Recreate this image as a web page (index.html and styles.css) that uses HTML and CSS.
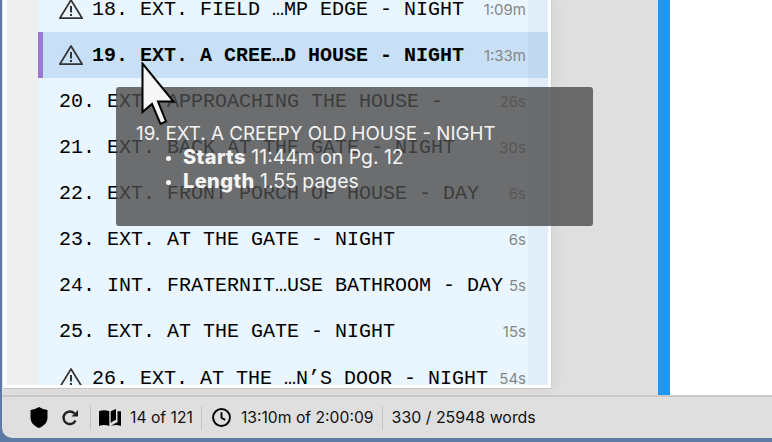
FILE: index.html
```html
<html>
    <head>
        <link rel="stylesheet" href="styles.css">
    </head>
    <body>
        <div class="window">
            <div class="main">
                <div class="panel">
                    <div class="margin"></div>
                    <div class="scenes">
                        <div class="scene">
                            <svg class="warn" viewBox="0 0 24 20"><path d="M12 1 .8 19.200h22.400z" fill="none" stroke="#333" stroke-width="1.700" stroke-linejoin="round"/><path d="M12 7v6.500M12 15v2" stroke="#333" stroke-width="2"/></svg>
                            <span class="name">18. EXT. FIELD …MP EDGE - NIGHT</span><span class="time">1:09m</span><span class="gutter"></span>
                        </div>
                        <div class="scene active">
                            <svg class="warn" viewBox="0 0 24 20"><path d="M12 1 .8 19.200h22.400z" fill="none" stroke="#333" stroke-width="1.700" stroke-linejoin="round"/><path d="M12 7v6.500M12 15v2" stroke="#333" stroke-width="2"/></svg>
                            <span class="name">19. EXT. A CREE…D HOUSE - NIGHT</span><span class="time">1:33m</span><span class="gutter"></span>
                        </div>
                        <div class="scene">
                            <span class="name">20. EXT. APPROACHING THE HOUSE -</span><span class="time">26s</span><span class="gutter"></span>
                        </div>
                        <div class="scene">
                            <span class="name">21. EXT. BACK AT THE GATE - NIGHT</span><span class="time">30s</span><span class="gutter"></span>
                        </div>
                        <div class="scene">
                            <span class="name">22. EXT. FRONT PORCH OF HOUSE - DAY</span><span class="time">6s</span><span class="gutter"></span>
                        </div>
                        <div class="scene">
                            <span class="name">23. EXT. AT THE GATE - NIGHT</span><span class="time">6s</span><span class="gutter"></span>
                        </div>
                        <div class="scene">
                            <span class="name">24. INT. FRATERNIT…USE BATHROOM - DAY</span><span class="time">5s</span><span class="gutter"></span>
                        </div>
                        <div class="scene">
                            <span class="name">25. EXT. AT THE GATE - NIGHT</span><span class="time">15s</span><span class="gutter"></span>
                        </div>
                        <div class="scene">
                            <svg class="warn" viewBox="0 0 24 20"><path d="M12 1 .8 19.200h22.400z" fill="none" stroke="#333" stroke-width="1.700" stroke-linejoin="round"/><path d="M12 7v6.500M12 15v2" stroke="#333" stroke-width="2"/></svg>
                            <span class="name">26. EXT. AT THE …N’S DOOR - NIGHT</span><span class="time">54s</span><span class="gutter"></span>
                        </div>
                    </div>
                </div>
                <div class="divider"></div>
                <div class="page"></div>
            </div>
            <div class="statusbar">
                <svg class="icon shield" viewBox="0 0 18 21"><path d="M9 0C11.500 1.500 14.500 2.500 17.500 3v7.500C17.500 15.500 14 19 9 21 4 19 .5 15.500 .5 10.500V3C3.500 2.500 6.500 1.500 9 0z" fill="#000"/></svg>
                <svg class="icon reload" viewBox="0 0 18 18"><path d="M14.500 11.500A6.300 6.300 0 1 1 13.500 4.500" fill="none" stroke="#222" stroke-width="2.400"/><path d="M10.500 7.500H17V1z" fill="#222"/></svg>
                <span class="sep"></span>
                <svg class="icon book" viewBox="0 0 22 18" preserveAspectRatio="none"><path d="M0 2.500C3 1 7 1 10.300 2.500V18C7 16.500 3 16.500 0 18z" fill="#000"/><path d="M11.700 2.500C13.500 1.500 15.500 .5 17 0V11.500C15 12.500 13 13.500 11.700 15z" fill="#000"/><path d="M18.500 2.500H22V18C18.500 16.500 15 16.500 11.700 18c2-1.700 4.500-3 6.800-4z" fill="#000"/></svg>
                <span class="stat">14 of 121</span>
                <span class="sep"></span>
                <svg class="icon clock" viewBox="0 0 18 18"><circle cx="9" cy="9" r="8" fill="none" stroke="#000" stroke-width="1.800"/><path d="M9 4v5.300l3.500 2" fill="none" stroke="#000" stroke-width="1.800"/></svg>
                <span class="stat">13:10m of 2:00:09</span>
                <span class="sep"></span>
                <span class="stat words">330 / 25948 words</span>
            </div>
        </div>
        <div class="tooltip">
            <div class="tip-title">19. EXT. A CREEPY OLD HOUSE - NIGHT</div>
            <ul>
                <li><b>Starts</b> 11:44m on Pg. 12</li>
                <li><b>Length</b> 1.55 pages</li>
            </ul>
        </div>
        <svg class="cursor" viewBox="0 0 36 64"><path d="M1.500 1.500V50L11 42 19.500 62 25 59.500 17 39.500H32.500z" fill="#f6f6f6" stroke="#000" stroke-width="2" stroke-linejoin="miter"/></svg>
    </body>
</html>
```

FILE: styles.css
```css
html, body {
    margin: 0;
    height: 100%;
    overflow: hidden;
}
body {
    background-color: #5c7aa3;
    font-family: 'Inter', sans-serif;
}
.window {
    display: flex;
    flex-direction: column;
    width: 770px;
    height: 438px;
    margin-left: 2px;
    background-color: #dfdfdf;
    border-bottom-left-radius: 10px;
    overflow: hidden;
}
.main {
    display: flex;
    height: 397px;
    flex: none;
    border-bottom: 2px solid #c9c9c9;
    box-sizing: border-box;
}
.panel {
    display: flex;
    width: 549px;
    height: 389px;
    margin-left: 1px;
    box-sizing: border-box;
    padding: 0 3px 3px 4px;
    background-color: #fff;
    border-right: 1px solid #d0d0d0;
    border-bottom: 1px solid #c6c6c6;
    box-shadow: 4px 0 12px rgba(0, 0, 0, 0.04);
}
.margin {
    width: 31px;
    background-color: #eeeeee;
}
.scenes {
    width: 510px;
    overflow: hidden;
    background-color: #e9f5ff;
}
.scene {
    display: flex;
    align-items: center;
    height: 46.14px;
    padding-left: 21px;
    box-sizing: border-box;
}
.scene:first-child {
    margin-top: -14px;
}
.scene.active {
    padding-left: 16px;
    border-left: 5px solid #9b78d0;
    background-color: #c7e0f5;
}
.scene.active .name {
    font-weight: bold;
}
.warn {
    width: 24px;
    height: 20px;
    margin-right: 9px;
    flex: none;
}
.name {
    flex: 1;
    font-family: 'Liberation Mono', monospace;
    font-size: 20px;
    color: #000;
    white-space: nowrap;
}
.time {
    font-size: 15px;
    color: #868686;
    margin-right: 2px;
}
.gutter {
    width: 20px;
    height: 100%;
    background-color: rgba(0, 40, 80, 0.035);
    flex: none;
}
.divider {
    width: 12px;
    margin-left: 106px;
    background-color: #2196f3;
}
.page {
    flex: 1;
    background-color: #fff;
}
.statusbar {
    display: flex;
    align-items: center;
    flex: 1;
    padding-left: 28px;
    font-size: 15.7px;
    color: #111;
}
.icon {
    flex: none;
}
.shield {
    width: 18px;
    height: 21px;
}
.reload {
    width: 18px;
    height: 18px;
    margin: 0 3px 0 13px;
}
.book {
    width: 22px;
    height: 17px;
    margin-right: 9px;
}
.clock {
    width: 19px;
    height: 19px;
    margin: 0 10px 0 2px;
}
.sep {
    width: 1px;
    height: 24px;
    margin: 0 8px;
    background-color: #c4c4c4;
}
.stat {
    white-space: nowrap;
}
.words {
    font-size: 15.9px;
    margin-left: 1px;
}
.tooltip {
    position: absolute;
    left: 116px;
    top: 87px;
    width: 477px;
    height: 139px;
    box-sizing: border-box;
    padding: 35px 20px 0;
    border-radius: 3px;
    background-color: rgba(75, 75, 75, 0.8);
    color: #f4f4f4;
    line-height: 24px;
}
.tip-title {
    font-size: 18.8px;
}
.tooltip ul {
    margin: -1px 0 0;
    padding-left: 47px;
    font-size: 19.4px;
}
.tooltip li::marker {
    font-size: 15px;
}
.tooltip b {
    font-size: 20px;
    font-weight: 800;
    letter-spacing: 0.4px;
}
.cursor {
    position: absolute;
    left: 141px;
    top: 62px;
    width: 36px;
    height: 64px;
}
```
